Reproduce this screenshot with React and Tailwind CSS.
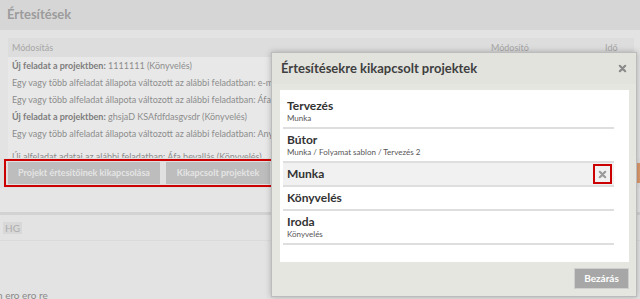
import React from "react";

function XIcon({ className }) {
  return (
    <svg viewBox="0 0 10 10" className={className} fill="none">
      <path d="M2 2 L8 8 M8 2 L2 8" stroke="currentColor" strokeWidth="2.4" strokeLinecap="round" />
    </svg>
  );
}

const rows = [
  { b: "Új feladat a projektben:", t: " 1111111 (Könyvelés)" },
  { t: "Egy vagy több alfeladat állapota változott az alábbi feladatban: e-mail kiküldése (Munka)" },
  { t: "Egy vagy több alfeladat állapota változott az alábbi feladatban: Áfa bevallás (Könyvelés)" },
  { b: "Új feladat a projektben:", t: " ghsjaD KSAfdfdasgvsdr (Könyvelés)" },
  { t: "Egy vagy több alfeladat állapota változott az alábbi feladatban: Anyagbeszerzés (Bútor)" },
];

const items = [
  { title: "Tervezés", sub: "Munka" },
  { title: "Bútor", sub: "Munka / Folyamat sablon / Tervezés 2" },
  { title: "Munka", active: true },
  { title: "Könyvelés" },
  { title: "Iroda", sub: "Könyvelés" },
];

export default function App() {
  return (
    <div className="relative w-[640px] h-[299px] overflow-hidden bg-[#e3e3e3] font-['Lato',sans-serif]">
      {/* page header */}
      <div className="h-[30px] bg-[#d6d6d6] flex items-center px-[7px] text-[13px] font-bold text-[#9c9c9c]">
        Értesítések
      </div>

      {/* notifications table */}
      <div className="pt-[8px] pl-[8px] pr-[6px]">
        <div className="h-[19px] bg-[#dddddd] flex items-center pr-[9px] text-[9px] text-[#a6a6a6]">
          <span className="pl-[4px]">Módosítás</span>
          <span className="ml-auto w-[114px]">Módosító</span>
          <span className="w-[20px]">Idő</span>
        </div>
        <div className="h-[101px] overflow-hidden bg-[#e8e8e8]">
          {rows.map((r, i) => (
            <div key={i} className="h-[17px] leading-[17px] pl-[4px] text-[9px] text-[#8d8d8d] whitespace-nowrap">
              {r.b && <b className="font-bold text-[#7d7d7d]">{r.b}</b>}
              {r.t}
            </div>
          ))}
          <div className="h-[17px] mt-[6px] leading-[17px] pl-[4px] text-[9px] text-[#8d8d8d] whitespace-nowrap">
            Új alfeladat adatai az alábbi feladatban: Áfa bevallás (Könyvelés)
          </div>
        </div>
      </div>

      {/* buttons bar */}
      <div className="h-[30px] flex items-center bg-[#e0e0e0]">
        <div className="ml-[4px] h-[28px] border-[2px] border-[#cc0000] flex items-center gap-[6px] px-[2px]">
          <button className="h-[22px] w-[152px] bg-[#bdbdbd] text-[#e4e4e4] text-[9px] font-bold">
            Projekt értesítőinek kikapcsolása
          </button>
          <button className="h-[22px] w-[104px] bg-[#bdbdbd] text-[#e4e4e4] text-[9px] font-bold">
            Kikapcsolt projektek
          </button>
        </div>
        <div className="ml-auto mr-[-20px] h-[20px] w-[60px] bg-[#dd9a6c]" />
      </div>

      <div className="h-[24px] bg-[#e5e5e5]" />
      <div className="h-[3px] bg-[#d2d2d2]" />
      <div className="h-[26px] border-b border-[#dbdbdb] flex items-center pl-[3px]">
        <span className="h-[12px] px-[2px] bg-[#d8d8d8] text-[10px] leading-[12px] text-[#adadad]">HG</span>
      </div>
      <div className="h-[48px]" />
      <div className="text-[10px] text-[#8a8a8a] leading-[12px] -ml-[3px]">n ero ero re</div>

      {/* modal */}
      <div className="absolute left-[271px] top-[52px] w-[366px] h-[245px] bg-[#e6e6e1] border border-[#bcbcbc] shadow-[0_0_6px_rgba(0,0,0,0.25)]">
        <div className="h-[31px] flex items-center pl-[9px] pr-[9px] bg-[#e3e3de]">
          <span className="text-[13px] font-bold text-[#3f3f3f]">Értesítésekre kikapcsolt projektek</span>
          <XIcon className="ml-auto w-[9px] h-[9px] text-[#8a8a8a]" />
        </div>
        <div className="pt-[6px] pl-[8px] pr-[7px]">
          <div className="h-[172px] bg-white pt-[5px] pl-[3px] pr-[15px]">
            {items.map((it) => (
              <div
                key={it.title}
                className={`flex items-center pt-[4px] pb-[4px] pl-[4px] border-b-[2px] border-[#dedede] ${it.active ? "bg-[#f1f1f1]" : ""}`}
              >
                <div className="flex flex-col">
                  <span className="text-[12px] leading-[14px] font-bold text-[#333333]">{it.title}</span>
                  {it.sub && <span className="text-[8px] leading-[10px] text-[#555555]">{it.sub}</span>}
                </div>
                {it.active && (
                  <div className="ml-auto mr-[2px] -my-[3px] w-[19px] h-[20px] border-[2px] border-[#cc0000] flex items-center justify-center">
                    <XIcon className="w-[9px] h-[9px] text-[#9a9a9a]" />
                  </div>
                )}
              </div>
            ))}
          </div>
          <div className="flex justify-end mt-[6px]">
            <button className="w-[55px] h-[21px] bg-[#a7a7a7] border border-[#cfcfcf] text-white text-[10px] font-bold">
              Bezárás
            </button>
          </div>
        </div>
      </div>
    </div>
  );
}
